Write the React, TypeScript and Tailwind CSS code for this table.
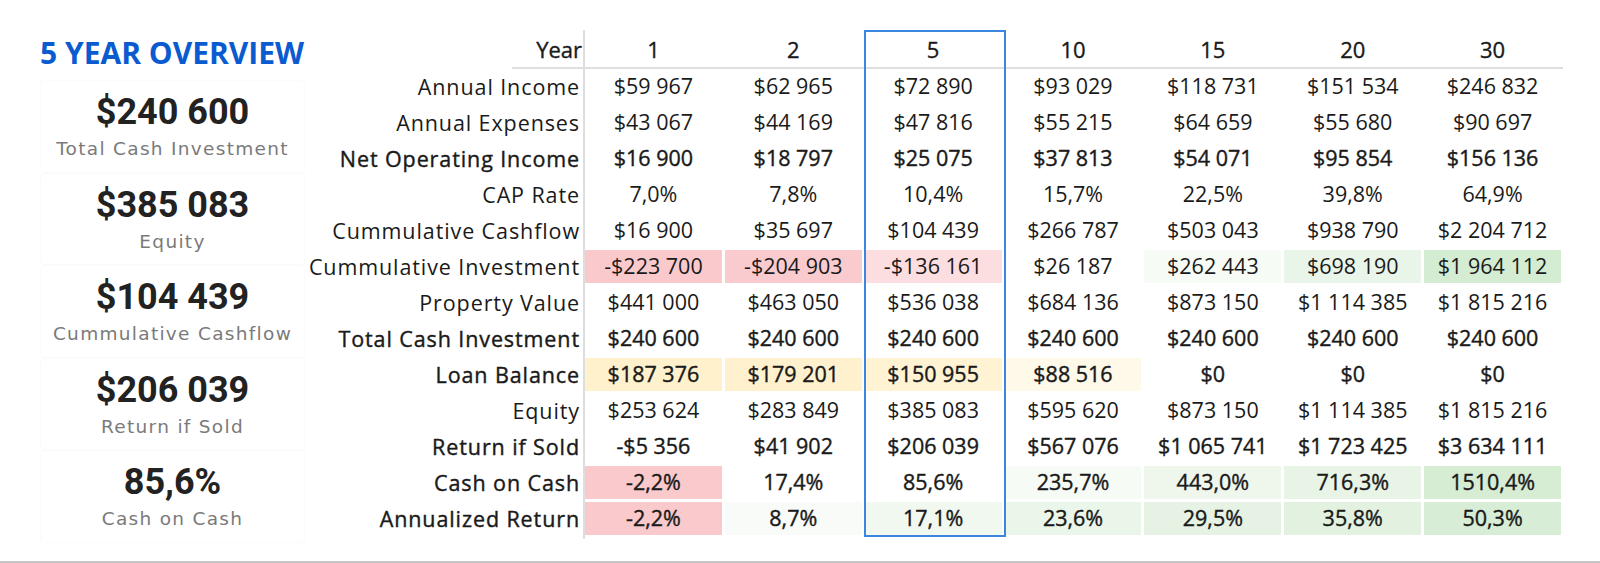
import React from "react";

type Cell = { v: string; bg?: string };
type Row = { label: string; bold?: boolean; cells: Cell[] };

const c = (v: string, bg?: string): Cell => ({ v, bg });

const years = ["1", "2", "5", "10", "15", "20", "30"];

const rows: Row[] = [
  { label: "Annual Income", cells: ["$59 967", "$62 965", "$72 890", "$93 029", "$118 731", "$151 534", "$246 832"].map((v) => c(v)) },
  { label: "Annual Expenses", cells: ["$43 067", "$44 169", "$47 816", "$55 215", "$64 659", "$55 680", "$90 697"].map((v) => c(v)) },
  { label: "Net Operating Income", bold: true, cells: ["$16 900", "$18 797", "$25 075", "$37 813", "$54 071", "$95 854", "$156 136"].map((v) => c(v)) },
  { label: "CAP Rate", cells: ["7,0%", "7,8%", "10,4%", "15,7%", "22,5%", "39,8%", "64,9%"].map((v) => c(v)) },
  { label: "Cummulative Cashflow", cells: ["$16 900", "$35 697", "$104 439", "$266 787", "$503 043", "$938 790", "$2 204 712"].map((v) => c(v)) },
  {
    label: "Cummulative Investment",
    cells: [
      c("-$223 700", "bg-[#f9c9cc]"),
      c("-$204 903", "bg-[#f9cbce]"),
      c("-$136 161", "bg-[#fcdde0]"),
      c("$26 187"),
      c("$262 443", "bg-[#f6fbf5]"),
      c("$698 190", "bg-[#e9f5e8]"),
      c("$1 964 112", "bg-[#d4ecd2]"),
    ],
  },
  { label: "Property Value", cells: ["$441 000", "$463 050", "$536 038", "$684 136", "$873 150", "$1 114 385", "$1 815 216"].map((v) => c(v)) },
  { label: "Total Cash Investment", bold: true, cells: ["$240 600", "$240 600", "$240 600", "$240 600", "$240 600", "$240 600", "$240 600"].map((v) => c(v)) },
  {
    label: "Loan Balance",
    bold: true,
    cells: [
      c("$187 376", "bg-[#fff1cc]"),
      c("$179 201", "bg-[#fff1cd]"),
      c("$150 955", "bg-[#fff3d3]"),
      c("$88 516", "bg-[#fff9ea]"),
      c("$0"),
      c("$0"),
      c("$0"),
    ],
  },
  { label: "Equity", cells: ["$253 624", "$283 849", "$385 083", "$595 620", "$873 150", "$1 114 385", "$1 815 216"].map((v) => c(v)) },
  { label: "Return if Sold", bold: true, cells: ["-$5 356", "$41 902", "$206 039", "$567 076", "$1 065 741", "$1 723 425", "$3 634 111"].map((v) => c(v)) },
  {
    label: "Cash on Cash",
    bold: true,
    cells: [
      c("-2,2%", "bg-[#f9c9cc]"),
      c("17,4%"),
      c("85,6%"),
      c("235,7%", "bg-[#f7fbf6]"),
      c("443,0%", "bg-[#eff7ed]"),
      c("716,3%", "bg-[#e8f4e6]"),
      c("1510,4%", "bg-[#d6ecd3]"),
    ],
  },
  {
    label: "Annualized Return",
    bold: true,
    cells: [
      c("-2,2%", "bg-[#f9c9cc]"),
      c("8,7%", "bg-[#f8fbf7]"),
      c("17,1%", "bg-[#f1f8f0]"),
      c("23,6%", "bg-[#ebf6ea]"),
      c("29,5%", "bg-[#e6f3e4]"),
      c("35,8%", "bg-[#e2f1e0]"),
      c("50,3%", "bg-[#d8edd5]"),
    ],
  },
];

const cards = [
  { v: "$240 600", l: "Total Cash Investment" },
  { v: "$385 083", l: "Equity" },
  { v: "$104 439", l: "Cummulative Cashflow" },
  { v: "$206 039", l: "Return if Sold" },
  { v: "85,6%", l: "Cash on Cash" },
];

const tableFont = { fontFamily: '"Open Sans", "Liberation Sans", sans-serif' };

export default function App() {
  return (
    <div className="h-[563px] w-[1600px] bg-white border-b-2 border-[#c6c6c6] flex text-[#1a1a1a] overflow-hidden">
      {/* Left panel */}
      <div className="ml-[40px] w-[265px] flex flex-col">
        <div
          className="mt-[33px] h-[38px] flex items-center text-[30px] font-bold text-[#0b5bd0] whitespace-nowrap"
          style={{ fontFamily: '"Open Sans", "Noto Sans", sans-serif' }}
        >
          5 YEAR OVERVIEW
        </div>
        <div className="mt-[9px] flex flex-col">
          {cards.map((k) => (
            <div key={k.l} className="h-[92.5px] border border-[#fbfbfb] rounded-[4px] flex flex-col items-center">
              <div
                className="mt-[11px] text-[36px] leading-[40px] font-bold text-[#222]"
                style={{ fontFamily: 'Roboto, "Liberation Sans", sans-serif' }}
              >
                {k.v}
              </div>
              <div
                className="mt-[5px] text-[18.5px] leading-[24px] tracking-[1.3px] text-[#7a7a7a] whitespace-nowrap"
                style={{ fontFamily: '"DejaVu Sans", Verdana, sans-serif' }}
              >
                {k.l}
              </div>
            </div>
          ))}
        </div>
      </div>

      {/* Table */}
      <div className="relative mt-[30px] flex flex-col" style={tableFont}>
        {/* header */}
        <div className="flex h-[39px]">
          <div className="w-[280px] border-r-2 border-[#dedede] flex justify-end">
            <div className="w-[71px] border-b-2 border-[#dedede] flex items-center justify-end pr-[1px] pt-[2px] text-[22px] [-webkit-text-stroke:0.35px_#1a1a1a]">
              Year
            </div>
          </div>
          <div className="w-[978px] border-b-2 border-[#dedede] grid grid-cols-7 gap-x-[3px] pr-[2px]">
            {years.map((y) => (
              <div key={y} className="flex items-center justify-center pt-[2px] text-[22px] [-webkit-text-stroke:0.35px_#1a1a1a]">
                {y}
              </div>
            ))}
          </div>
        </div>
        {/* rows */}
        {rows.map((r) => (
          <div key={r.label} className="flex h-[36px]">
            <div
              className={`w-[280px] border-r-2 border-[#dedede] flex items-center justify-end pr-[3px] pt-[1px] text-[21.5px] tracking-[0.9px] whitespace-nowrap ${
                r.bold ? "[-webkit-text-stroke:0.4px_#1a1a1a]" : ""
              }`}
            >
              {r.label}
            </div>
            <div className="w-[976px] grid grid-cols-7 gap-x-[3px] pt-[1px] pb-[2px]">
              {r.cells.map((cell, j) => (
                <div
                  key={j}
                  className={`flex items-center justify-center text-[21.5px] whitespace-nowrap ${
                    r.bold ? "[-webkit-text-stroke:0.4px_#1a1a1a]" : ""
                  } ${cell.bg ?? ""}`}
                >
                  {cell.v}
                </div>
              ))}
            </div>
          </div>
        ))}
        <div className="w-[280px] h-[2px] border-r-2 border-[#dedede]" />
        {/* highlighted column */}
        <div className="absolute left-[559px] top-0 w-[142px] h-[507px] border-2 border-[#3d86e0] pointer-events-none" />
      </div>
    </div>
  );
}
